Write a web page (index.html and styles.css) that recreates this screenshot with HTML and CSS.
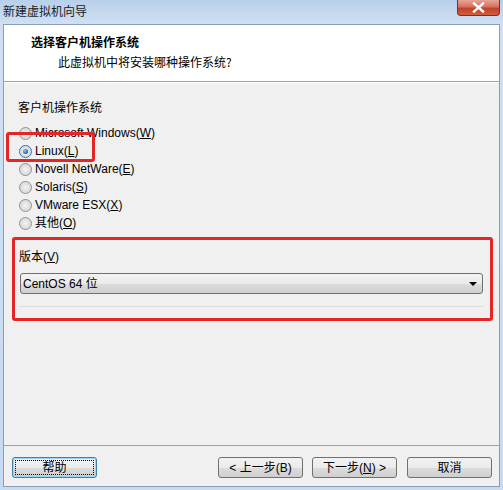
FILE: index.html
```html
<!DOCTYPE html>
<html lang="zh-CN">
<head>
<meta charset="utf-8">
<title>新建虚拟机向导</title>
<link rel="stylesheet" href="styles.css">
</head>
<body>
<div class="window">
  <div class="titlebar">
    <span class="title-text">新建虚拟机向导</span>
    <span class="close-btn"><svg width="13" height="11" viewBox="0 0 13 11"><path d="M2 1.5 L11 9.5 M11 1.5 L2 9.5" stroke="#fff" stroke-width="2.4" stroke-linecap="square"/></svg></span>
  </div>
  <div class="client">
    <div class="header">
      <div class="h-title">选择客户机操作系统</div>
      <div class="h-sub">此虚拟机中将安装哪种操作系统?</div>
    </div>
    <div class="main">
      <div class="label">客户机操作系统</div>
      <div class="radios">
        <div class="radio-row"><span class="radio"></span><span class="rt">Microsoft Windows(<u>W</u>)</span></div>
        <div class="radio-row"><span class="radio checked"></span><span class="rt">Linux(<u>L</u>)</span></div>
        <div class="radio-row"><span class="radio"></span><span class="rt">Novell NetWare(<u>E</u>)</span></div>
        <div class="radio-row"><span class="radio"></span><span class="rt">Solaris(<u>S</u>)</span></div>
        <div class="radio-row"><span class="radio"></span><span class="rt">VMware ESX(<u>X</u>)</span></div>
        <div class="radio-row"><span class="radio"></span><span class="rt">其他(<u>O</u>)</span></div>
      </div>
      <div class="label version">版本(<u>V</u>)</div>
      <div class="combo"><span class="combo-text">CentOS 64 位</span><span class="arrow"></span></div>
      <div class="faint-line"></div>
    </div>
    <div class="footer">
      <button class="btn focus">帮助</button>
      <div class="spacer"></div>
      <button class="btn">&lt; 上一步(B)</button>
      <button class="btn next">下一步(<u>N</u>) &gt;</button>
      <button class="btn cancel">取消</button>
    </div>
  </div>
</div>
<div class="mark mark-linux"></div>
<div class="mark mark-version"></div>
</body>
</html>
```
FILE: styles.css
```css
html, body {
  margin: 0;
  padding: 0;
}
body {
  width: 503px;
  height: 490px;
  overflow: hidden;
  position: relative;
  font-family: "Liberation Sans", "Noto Sans CJK SC", sans-serif;
  font-size: 12px;
  color: #000;
  background: #c4d9ef;
}
.window {
  width: 503px;
  height: 490px;
  box-sizing: border-box;
  padding: 0 3px 3px 3px;
  background: linear-gradient(180deg, #b8d0ea 0px, #cfe0f3 24px, #c6dbf1 100%);
  display: flex;
  flex-direction: column;
}
.titlebar {
  height: 24px;
  display: flex;
  align-items: flex-start;
  position: relative;
}
.title-text {
  font-family: "Noto Sans CJK SC", sans-serif;
  font-size: 12px;
  line-height: 14px;
  margin-top: 4px;
  color: #1a1a1a;
}
.close-btn {
  position: absolute;
  right: 0;
  top: 0;
  width: 43px;
  height: 16px;
  border: 1px solid #8a2a1c;
  border-top: none;
  border-radius: 0 0 4px 4px;
  background: linear-gradient(180deg, #e8a497 0%, #d7725f 45%, #c2412a 55%, #cf5c3e 100%);
  display: flex;
  align-items: center;
  justify-content: center;
  box-sizing: border-box;
}
.client {
  height: 463px;
  box-sizing: border-box;
  border: 1px solid #8d9db3;
  background: #f0f0f0;
  display: flex;
  flex-direction: column;
}
.header {
  height: 57px;
  box-sizing: border-box;
  background: #fff;
  border-bottom: 1px solid #a0a0a0;
  box-shadow: 0 1px 0 #fff;
  padding-left: 27px;
  font-family: "Noto Sans CJK SC", sans-serif;
}
.h-title {
  font-weight: bold;
  font-size: 12px;
  line-height: 14px;
  margin-top: 10px;
}
.h-sub {
  font-size: 12px;
  line-height: 14px;
  margin-top: 6px;
  padding-left: 27px;
}
.main {
  padding: 0 16px 0 14px;
  display: flex;
  flex-direction: column;
}
.label {
  font-family: "Liberation Sans", "Noto Sans CJK SC", sans-serif;
  line-height: 16px;
  margin-top: 18px;
}
.label.version {
  margin-top: 17px;
  padding-left: 1px;
}
.radios {
  margin-top: 8px;
  display: flex;
  flex-direction: column;
}
.radio-row {
  height: 18px;
  display: flex;
  align-items: center;
  padding-left: 1px;
}
.radio {
  width: 13px;
  height: 13px;
  box-sizing: border-box;
  border-radius: 50%;
  border: 1px solid #8e8f8f;
  background: radial-gradient(circle at 50% 50%, #f4f4f4 0%, #dcdcdc 60%, #ececec 100%);
  position: relative;
  flex: none;
}
.radio.checked {
  border-color: #3a6ea5;
}
.radio.checked::after {
  content: "";
  position: absolute;
  left: 3px;
  top: 3px;
  width: 5px;
  height: 5px;
  border-radius: 50%;
  background: radial-gradient(circle at 35% 35%, #8fc3f0 0%, #2a6cc4 60%, #174a8c 100%);
}
.rt {
  margin-left: 3px;
  line-height: 14px;
}
.combo {
  margin-top: 8px;
  margin-left: 2px;
  height: 21px;
  box-sizing: border-box;
  border: 1px solid #707070;
  border-radius: 3px;
  background: linear-gradient(180deg, #f3f3f3 0%, #ebebeb 50%, #dddddd 51%, #cfcfcf 100%);
  display: flex;
  align-items: center;
  padding-left: 2px;
  padding-right: 5px;
}
.combo-text {
  flex: 1;
  line-height: 14px;
}
.arrow {
  width: 0;
  height: 0;
  border-left: 4px solid transparent;
  border-right: 4px solid transparent;
  border-top: 4px solid #000;
}
.faint-line {
  margin-top: 12px;
  height: 1px;
  background: #dedede;
  margin-right: 0;
}
.footer {
  margin-top: auto;
  border-top: 1px solid #a0a0a0;
  padding: 11px 7px 8px 8px;
  display: flex;
  align-items: center;
}
.spacer {
  flex: 1;
}
.btn {
  width: 85px;
  height: 21px;
  box-sizing: border-box;
  border: 1px solid #707070;
  border-radius: 3px;
  background: linear-gradient(180deg, #f2f2f2 0%, #ebebeb 50%, #dddddd 51%, #cfcfcf 100%);
  font-family: "Liberation Sans", "Noto Sans CJK SC", sans-serif;
  font-size: 12px;
  color: #000;
  padding: 0;
  margin: 0;
  line-height: 14px;
}
.btn.focus {
  border-color: #3c7fb1;
  box-shadow: inset 0 0 0 1px #9fd3f3;
  outline: 1px dotted #000;
  outline-offset: -4px;
}
.btn.next {
  margin-left: 9px;
}
.btn.cancel {
  margin-left: 10px;
}
.mark {
  position: absolute;
  border: 3px solid #e52626;
  border-radius: 3px;
  box-sizing: border-box;
}
.mark-linux {
  left: 6px;
  top: 132px;
  width: 89px;
  height: 30px;
}
.mark-version {
  left: 12px;
  top: 237px;
  width: 481px;
  height: 84px;
}
```
